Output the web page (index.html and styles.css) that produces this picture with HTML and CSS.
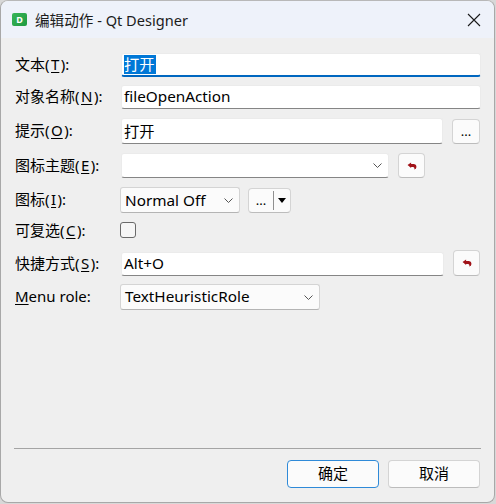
FILE: index.html
```html
<!DOCTYPE html>
<html lang="zh-CN">
<head>
    <meta charset="UTF-8">
    <title>编辑动作 - Qt Designer</title>
    <link rel="stylesheet" href="styles.css">
</head>
<body>
    <div class="window">
        <header class="titlebar">
            <div class="app-icon">D</div>
            <div class="title">编辑动作 - Qt Designer</div>
            <svg class="close" width="14" height="14" viewBox="0 0 14 14"><path d="M1 1 L13 13 M13 1 L1 13" stroke="#1a1a1a" stroke-width="1.1" fill="none"/></svg>
        </header>

        <div class="form">
            <div class="row row-tight">
                <label>文本(<u>T</u>):</label>
                <div class="field field-focus"><span class="selected">打开</span></div>
            </div>
            <div class="row">
                <label>对象名称(<u>N</u>):</label>
                <div class="field">fileOpenAction</div>
            </div>
            <div class="row row-26">
                <label>提示(<u>O</u>):</label>
                <div class="field field-tip">打开</div>
                <button class="btn-small btn-dots">...</button>
            </div>
            <div class="row row-25">
                <label>图标主题(<u>E</u>):</label>
                <div class="field field-theme">
                    <svg class="chevron" width="9" height="5" viewBox="0 0 9 5"><path d="M0.5 0.5 L4.5 4.5 L8.5 0.5" stroke="#555" fill="none"/></svg>
                </div>
                <button class="btn-small btn-reset">
                    <svg width="10" height="8" viewBox="0 0 11 9"><path d="M0.5 3.5 L4.5 0.5 V2.2 H7 Q10.5 2.2 10.5 5.5 Q10.5 8 8 8.5 Q9 6.5 7 5.6 H4.5 V6.8 Z" fill="#a01218"/></svg>
                </button>
            </div>
            <div class="row row-26">
                <label>图标(<u>I</u>):</label>
                <div class="combo combo-state">Normal Off
                    <svg class="chevron" width="9" height="5" viewBox="0 0 9 5"><path d="M0.5 0.5 L4.5 4.5 L8.5 0.5" stroke="#555" fill="none"/></svg>
                </div>
                <div class="btn-split">
                    <span class="btn-split-main">...</span>
                    <span class="btn-split-arrow"></span>
                </div>
            </div>
            <div class="row row-check">
                <label class="label-check">可复选(<u>C</u>):</label>
                <div class="checkbox"></div>
            </div>
            <div class="row row-tight row-shortcut">
                <label>快捷方式(<u>S</u>):</label>
                <div class="field field-shortcut">Alt+O</div>
                <button class="btn-small btn-reset">
                    <svg width="10" height="8" viewBox="0 0 11 9"><path d="M0.5 3.5 L4.5 0.5 V2.2 H7 Q10.5 2.2 10.5 5.5 Q10.5 8 8 8.5 Q9 6.5 7 5.6 H4.5 V6.8 Z" fill="#a01218"/></svg>
                </button>
            </div>
            <div class="row row-26">
                <label class="label-plain"><u>M</u>enu role:</label>
                <div class="combo combo-role">TextHeuristicRole
                    <svg class="chevron" width="9" height="5" viewBox="0 0 9 5"><path d="M0.5 0.5 L4.5 4.5 L8.5 0.5" stroke="#555" fill="none"/></svg>
                </div>
            </div>
        </div>

        <footer class="footer">
            <button class="btn btn-default">确定</button>
            <button class="btn">取消</button>
        </footer>
    </div>
</body>
</html>
```

FILE: styles.css
```css
* {
    margin: 0;
    padding: 0;
    box-sizing: border-box;
    font-family: "Noto Sans", "Noto Sans CJK SC", sans-serif;
}
body {
    background: #d8d8d8;
    width: 496px;
    height: 504px;
    overflow: hidden;
}
.window {
    display: flex;
    flex-direction: column;
    width: 495px;
    height: 503px;
    background: #efefef;
    border: 1px solid #a8a8a8;
    border-top: 1px solid #b8b8b8;
    border-radius: 8px;
    overflow: hidden;
}
.titlebar {
    display: flex;
    align-items: center;
    height: 37px;
    flex-shrink: 0;
    padding-left: 11px;
    background: #eef2fa;
    color: #1c1c1c;
}
.app-icon {
    width: 15px;
    height: 13px;
    margin-right: 8px;
    background: linear-gradient(135deg, #38b558, #1f9a40);
    border-radius: 2px;
    color: #fff;
    font-size: 9px;
    font-weight: 700;
    line-height: 13px;
    text-align: center;
}
.title {
    font-size: 14.6px;
    flex: 1;
}
.close {
    margin-right: 13px;
}
.form {
    padding: 15px 13px 0;
    flex: 1;
    color: #000;
    font-size: 15px;
}
.row {
    display: flex;
    align-items: center;
    height: 24px;
    margin-bottom: 9px;
}
.row-tight {
    margin-bottom: 8px;
}
.row-26 {
    height: 26px;
}
.row-25 {
    height: 25px;
}
.row-check {
    height: 16px;
    margin-bottom: 14px;
}
.row label {
    width: 107px;
    flex-shrink: 0;
    padding-left: 1px;
    padding-bottom: 2px;
    font-size: 15px;
    line-height: 20px;
}
.row .label-check {
    padding-bottom: 0;
}
.row u {
    margin: 0 1.5px;
    text-underline-offset: 2px;
}
.row .label-plain u {
    margin: 0;
}
.field {
    position: relative;
    display: flex;
    align-items: center;
    flex: 1;
    height: 24px;
    padding-left: 2px;
    padding-bottom: 2px;
    background: #fff;
    border: 1px solid #ebebeb;
    border-bottom: 1px solid #858585;
    border-radius: 3px;
    font-size: 15.3px;
}
.field-focus {
    padding-bottom: 0;
    border-bottom: 2px solid #0067c0;
}
.selected {
    background: #0078d7;
    color: #fff;
    line-height: 19px;
    padding-right: 1px;
}
.field-tip {
    flex: none;
    width: 322px;
    height: 26px;
}
.field-theme {
    flex: none;
    width: 268px;
    height: 25px;
}
.field-shortcut {
    flex: none;
    width: 323px;
}
.chevron {
    position: absolute;
    right: 6px;
    top: 9px;
}
.btn-small {
    display: flex;
    align-items: center;
    justify-content: center;
    background: #fbfbfb;
    border: 1px solid #d4d4d4;
    border-bottom-color: #bcbcbc;
    border-radius: 4px;
    color: #000;
}
.btn-dots {
    width: 28px;
    height: 25px;
    margin-left: 9px;
    font-size: 13px;
}
.btn-reset {
    width: 27px;
    height: 25px;
    margin-left: 9px;
}
.row-shortcut .btn-reset {
    height: 26px;
    margin-top: -2px;
}
.combo {
    position: relative;
    display: flex;
    align-items: center;
    height: 26px;
    margin-left: -1px;
    padding-left: 4px;
    background: #fbfbfb;
    border: 1px solid #d4d4d4;
    border-bottom-color: #b4b4b4;
    border-radius: 3px;
    font-size: 15.3px;
}
.combo .chevron {
    top: 10px;
}
.combo-state {
    width: 120px;
}
.combo-role {
    width: 200px;
    padding-bottom: 2px;
}
.btn-split {
    display: flex;
    align-items: center;
    width: 43px;
    height: 25px;
    margin-top: 1px;
    margin-left: 8px;
    background: #fbfbfb;
    border: 1px solid #d4d4d4;
    border-bottom-color: #bcbcbc;
    border-radius: 4px;
    font-size: 13px;
}
.btn-split-main {
    width: 25px;
    height: 19px;
    line-height: 19px;
    text-align: center;
    border-right: 1px solid #909090;
}
.btn-split-arrow {
    width: 0;
    height: 0;
    margin-left: 4px;
    border-left: 4.5px solid transparent;
    border-right: 4.5px solid transparent;
    border-top: 5px solid #000;
}
.checkbox {
    width: 16px;
    height: 16px;
    margin-left: -1px;
    background: #f6f6f6;
    border: 1px solid #6a6a6a;
    border-radius: 3px;
}
.footer {
    display: flex;
    justify-content: flex-end;
    gap: 9px;
    height: 40px;
    flex-shrink: 0;
    margin: 0 13px 14px;
    padding: 11px 1px 0 0;
    border-top: 1px solid #a4a4a4;
}
.btn {
    width: 92px;
    height: 28px;
    padding-bottom: 3px;
    background: #fbfbfb;
    border: 1px solid #d4d4d4;
    border-bottom-color: #bcbcbc;
    border-radius: 4px;
    color: #000;
    font-size: 15px;
}
.btn-default {
    border: 1px solid #2f8ad8;
}
```
